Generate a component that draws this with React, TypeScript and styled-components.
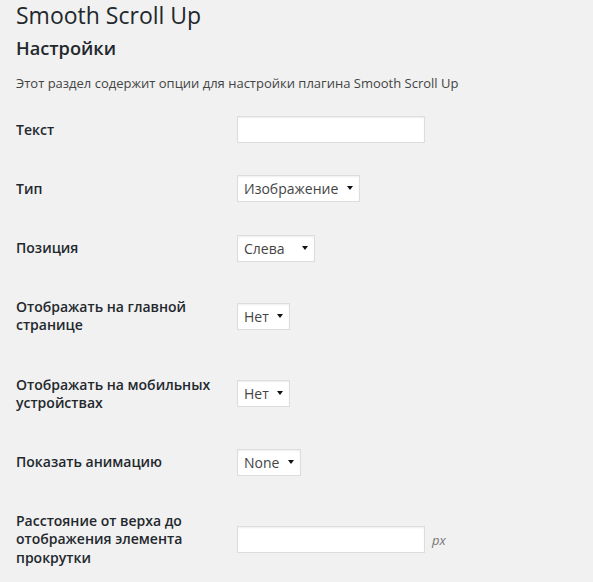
import { createGlobalStyle, styled } from "styled-components";

const GlobalStyle = createGlobalStyle`
  html, body {
    margin: 0;
    padding: 0;
    background: #f1f1f1;
  }
  body {
    font-family: "Open Sans", "Noto Sans", sans-serif;
    color: #444;
  }
`;

const Page = styled.div`
  padding: 0 16px;
`;

const Title = styled.h1`
  margin: 0;
  font-size: 23px;
  line-height: 30px;
  font-weight: 400;
  color: #23282d;
`;

const SectionTitle = styled.h2`
  margin: 7px 0 0;
  font-size: 18.2px;
  line-height: 23.66px;
  font-weight: 600;
  color: #23282d;
`;

const Intro = styled.p`
  margin: 13px 0 7px;
  font-size: 13px;
  line-height: 19.5px;
  color: #444;
`;

const FormTable = styled.div`
  display: flex;
  flex-direction: column;
`;

const Row = styled.div`
  display: flex;
  align-items: center;
`;

const Label = styled.label`
  box-sizing: border-box;
  flex: 0 0 210px;
  padding: 20.5px 10px 20.5px 0;
  font-size: 14px;
  line-height: 18.2px;
  font-weight: 600;
  color: #23282d;
`;

const Field = styled.div`
  display: flex;
  align-items: center;
  padding: 0 10px;
`;

const TextInput = styled.input`
  box-sizing: border-box;
  width: 188px;
  height: 27px;
  margin: 1px;
  padding: 3px 5px;
  border: 1px solid #ddd;
  background: #fff;
  box-shadow: inset 0 1px 2px rgba(0, 0, 0, 0.07);
  font-family: inherit;
  font-size: 14px;
  color: #32373c;
  outline: none;
`;

const SelectWrap = styled.div<{ $width: number }>`
  position: relative;
  margin: 1px;
  width: ${(p) => p.$width}px;
  height: 27px;
  &::after {
    content: "";
    position: absolute;
    right: 7px;
    top: 11px;
    border-left: 3px solid transparent;
    border-right: 3px solid transparent;
    border-top: 4px solid #111;
    pointer-events: none;
  }
`;

const Select = styled.select`
  appearance: none;
  -webkit-appearance: none;
  box-sizing: border-box;
  width: 100%;
  height: 100%;
  margin: 0;
  padding: 0 20px 0 6px;
  border: 1px solid #ddd;
  border-radius: 0;
  background: #fff;
  box-shadow: inset 0 1px 2px rgba(0, 0, 0, 0.07);
  font-family: inherit;
  font-size: 14px;
  line-height: 25px;
  color: #444;
  outline: none;
`;

const Unit = styled.span`
  margin-left: 6px;
  font-size: 13px;
  font-style: italic;
  color: #777;
`;

type Choice = { label: string; width: number; options: string[] };

const choices: Record<string, Choice> = {
  type: { label: "Тип", width: 123, options: ["Изображение", "Текст"] },
  position: { label: "Позиция", width: 78, options: ["Слева", "Справа"] },
  home: { label: "Отображать на главной странице", width: 53, options: ["Нет", "Да"] },
  mobile: { label: "Отображать на мобильных устройствах", width: 53, options: ["Нет", "Да"] },
  animation: { label: "Показать анимацию", width: 64, options: ["None", "Fade"] },
};

const SelectRow = ({ label, width, options }: Choice) => (
  <Row>
    <Label>{label}</Label>
    <Field>
      <SelectWrap $width={width}>
        <Select defaultValue={options[0]}>
          {options.map((o) => (
            <option key={o}>{o}</option>
          ))}
        </Select>
      </SelectWrap>
    </Field>
  </Row>
);

const App = () => {
  return (
    <Page>
      <GlobalStyle />
      <Title>Smooth Scroll Up</Title>
      <SectionTitle>Настройки</SectionTitle>
      <Intro>Этот раздел содержит опции для настройки плагина Smooth Scroll Up</Intro>
      <FormTable>
        <Row>
          <Label>Текст</Label>
          <Field>
            <TextInput type="text" />
          </Field>
        </Row>
        <SelectRow {...choices.type} />
        <SelectRow {...choices.position} />
        <SelectRow {...choices.home} />
        <SelectRow {...choices.mobile} />
        <SelectRow {...choices.animation} />
        <Row>
          <Label>Расстояние от верха до отображения элемента прокрутки</Label>
          <Field>
            <TextInput type="text" />
            <Unit>px</Unit>
          </Field>
        </Row>
      </FormTable>
    </Page>
  );
};

export default App;
